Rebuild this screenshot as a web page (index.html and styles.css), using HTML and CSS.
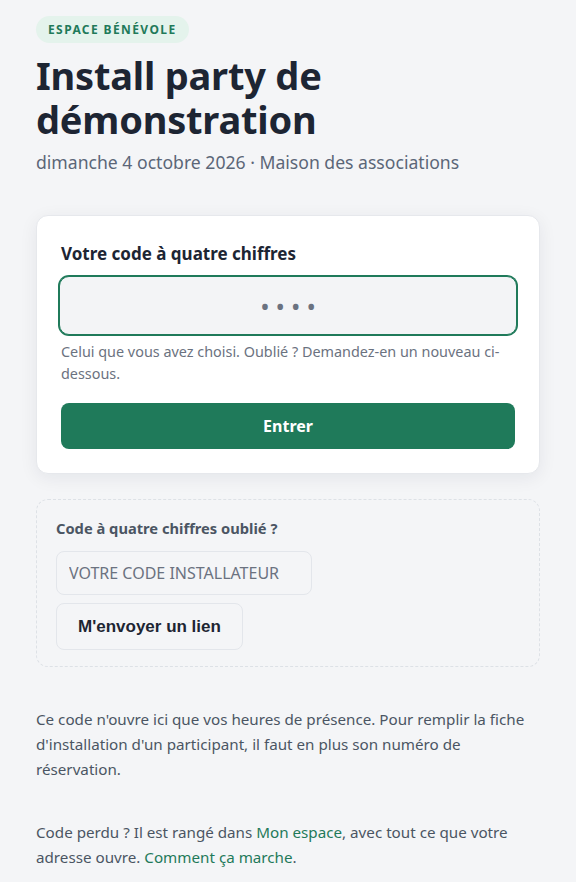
FILE: index.html
```html
<!DOCTYPE html>
<html lang="fr">
<head>
<meta charset="utf-8">
<title>Install party de démonstration</title>
<link rel="stylesheet" href="styles.css">
</head>
<body>
<main class="page">
  <header class="head">
    <span class="badge">ESPACE BÉNÉVOLE</span>
    <h1 class="title">Install party de démonstration</h1>
    <p class="subtitle">dimanche 4 octobre 2026 · Maison des associations</p>
  </header>

  <form class="card">
    <label class="card-label" for="pin">Votre code à quatre chiffres</label>
    <input class="pin" id="pin" type="password" inputmode="numeric" placeholder="••••">
    <p class="help">Celui que vous avez choisi. Oublié ? Demandez-en un nouveau ci-dessous.</p>
    <button class="primary" type="button">Entrer</button>
  </form>

  <form class="forgot">
    <p class="forgot-label">Code à quatre chiffres oublié ?</p>
    <input class="code" type="text" placeholder="VOTRE CODE INSTALLATEUR">
    <div><button class="secondary" type="button">M'envoyer un lien</button></div>
  </form>

  <p class="note">Ce code n'ouvre ici que vos heures de présence. Pour remplir la fiche d'installation d'un participant, il faut en plus son numéro de réservation.</p>
  <p class="note second">Code perdu ? Il est rangé dans <a href="#">Mon espace</a>, avec tout ce que votre adresse ouvre. <a href="#">Comment ça marche</a>.</p>
</main>
</body>
</html>
```

FILE: styles.css
```css
* { box-sizing: border-box; }

html, body {
  margin: 0;
  background: #f4f5f7;
}

body {
  font-family: "Noto Sans", "Open Sans", sans-serif;
  color: #1f2733;
}

.page {
  max-width: 576px;
  padding: 16px 36px 20px;
}

.head {
  display: flex;
  flex-direction: column;
  align-items: flex-start;
}

.badge {
  display: inline-block;
  background: #e4f3ec;
  color: #1f7a5a;
  font-size: 12px;
  font-weight: 700;
  letter-spacing: 1.4px;
  line-height: 27px;
  height: 27px;
  padding: 0 12px;
  border-radius: 999px;
}

.title {
  margin: 10px 0 0;
  font-size: 38px;
  line-height: 44px;
  font-weight: 700;
  color: #1d2533;
  letter-spacing: -0.2px;
}

.subtitle {
  margin: 8px 0 0;
  font-size: 17.6px;
  line-height: 26px;
  color: #5b6677;
}

.card {
  margin-top: 40px;
  background: #ffffff;
  border: 1px solid #e6e8ec;
  border-radius: 12px;
  box-shadow: 0 4px 18px rgba(20, 30, 50, 0.07);
  padding: 24px;
  display: flex;
  flex-direction: column;
}

.card-label {
  margin-top: 2px;
  font-size: 17px;
  font-weight: 700;
  line-height: 24px;
  color: #1d2533;
}

.pin {
  margin: 10px -2px 0 -2px;
  height: 59px;
  background: #f3f4f6;
  border: 1px solid #1f7a5a;
  box-shadow: 0 0 0 1px #1f7a5a;
  border-radius: 10px;
  font-family: "Noto Sans", sans-serif;
  font-size: 25px;
  text-align: center;
  letter-spacing: 6px;
  text-indent: 6px;
  outline: none;
}

.pin::placeholder {
  color: #6b7280;
  opacity: 1;
}

.help {
  margin: 6px 0 0;
  font-size: 14.4px;
  line-height: 22px;
  color: #6b7280;
}

.primary {
  margin-top: 18px;
  height: 46px;
  border: 0;
  border-radius: 8px;
  background: #1f7a5a;
  color: #ffffff;
  font-family: "Noto Sans", sans-serif;
  font-size: 16px;
  font-weight: 700;
}

.forgot {
  margin-top: 25px;
  border: 1px dashed #dde1e6;
  border-radius: 12px;
  padding: 17px 19px 16px;
  display: flex;
  flex-direction: column;
  align-items: flex-start;
}

.forgot-label {
  margin: 0;
  font-size: 14.7px;
  line-height: 22px;
  font-weight: 700;
  color: #4b5563;
}

.code {
  margin-top: 12px;
  width: 256px;
  height: 44px;
  padding: 0 12px;
  border: 1px solid #e3e6eb;
  border-radius: 8px;
  background: #f4f5f7;
  font-family: "Noto Sans", sans-serif;
  font-size: 16px;
  color: #1f2733;
}

.code::placeholder {
  color: #6b7280;
  opacity: 1;
}

.secondary {
  margin-top: 8px;
  height: 47px;
  padding: 0 21px;
  border: 1px solid #e3e6eb;
  border-radius: 8px;
  background: #f4f5f7;
  font-family: "Liberation Sans", Arial, sans-serif;
  font-size: 17px;
  font-weight: 700;
  color: #1d2533;
}

.note {
  margin: 40px 0 0;
  font-size: 15.2px;
  line-height: 25px;
  color: #4b5563;
}

.note.second {
  margin-top: 38px;
}

.note a {
  color: #1f7a5a;
  text-decoration: none;
}
```
